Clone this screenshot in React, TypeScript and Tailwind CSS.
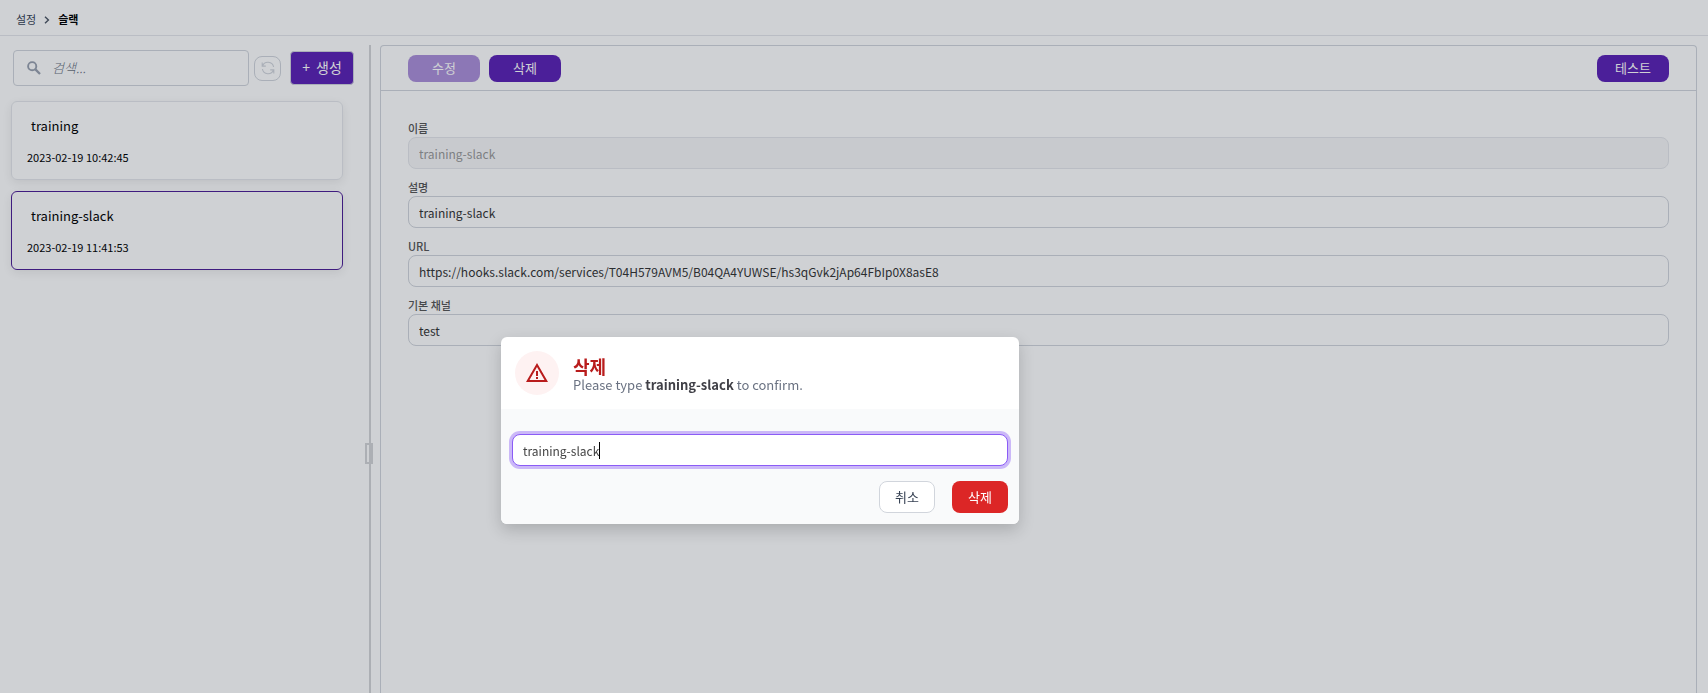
import { MdWarningAmber } from "react-icons/md";

const channels = [
  { name: "training", date: "2023-02-19 10:42:45", selected: false },
  { name: "training-slack", date: "2023-02-19 11:41:53", selected: true },
];

const fields = [
  { id: "name", label: "이름", value: "training-slack", disabled: true },
  { id: "description", label: "설명", value: "training-slack", disabled: false },
  {
    id: "url",
    label: "URL",
    value: "https://hooks.slack.com/services/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",
    disabled: false,
  },
  { id: "channel", label: "기본 채널", value: "test", disabled: false },
];

function SearchIcon() {
  return (
    <svg viewBox="0 0 14 14" className="size-3.5 shrink-0 text-gray-400" fill="none" stroke="currentColor">
      <circle cx="5.2" cy="5.2" r="4.1" strokeWidth="1.9" />
      <path d="M8.4 8.4 13 13" strokeWidth="2.3" />
    </svg>
  );
}

function RefreshIcon() {
  return (
    <svg viewBox="0 0 14 14" className="size-3.5" fill="none" stroke="currentColor" strokeWidth="1.1">
      <path d="M1.2 1.5v3.6h3.6M1.5 5A5.8 5.8 0 0 1 12.6 6" />
      <path d="M12.8 12.5V8.9H9.2M12.5 9A5.8 5.8 0 0 1 1.4 8" />
    </svg>
  );
}

function Breadcrumb() {
  return (
    <nav className="flex h-9 items-center gap-2 border-b border-[#e5e7eb] px-4 pt-1 text-[11px]">
      <a href="#settings" className="text-gray-700">설정</a>
      <svg viewBox="0 0 6 8" className="h-2 w-1.5" fill="none" stroke="#4b5563" strokeWidth="1.4">
        <path d="M1 0.8 4.4 4 1 7.2" />
      </svg>
      <span className="font-bold text-black">슬랙</span>
    </nav>
  );
}

function Sidebar() {
  return (
    <aside className="w-[369px] shrink-0">
      <div className="flex items-center pt-3.5 pr-[15px] pl-[13px]">
        <div className="flex h-9 flex-1 items-center gap-[11px] rounded border border-gray-300 px-[13px]">
          <SearchIcon />
          <input
            type="search"
            aria-label="검색"
            placeholder="검색..."
            className="h-full w-full min-w-0 bg-transparent pb-0.5 text-[13px] font-light italic outline-none placeholder:text-gray-500"
          />
        </div>
        <button
          type="button"
          aria-label="새로고침"
          className="ml-[5px] flex h-[25px] w-[27px] items-center justify-center rounded-lg border border-gray-300 text-gray-300"
        >
          <RefreshIcon />
        </button>
        <button
          type="button"
          className="ml-[9px] flex h-[34px] w-16 items-center justify-center gap-1.5 rounded-sm border border-gray-300 bg-[#5b21b6] pb-0.5 text-sm text-white"
        >
          <span>+</span>
          <span>생성</span>
        </button>
      </div>
      <ul className="flex flex-col gap-[11px] pt-[15px] pr-[26px] pl-[11px]">
        {channels.map((c) => (
          <li
            key={c.name}
            className={`flex h-[79px] flex-col justify-center gap-[11px] rounded-md border px-[15px] pt-px shadow-[0_3px_10px_rgba(0,0,0,0.08)] ${
              c.selected ? "border-[#4c1d95]" : "border-gray-200"
            }`}
          >
            <span className="pl-1 text-[13px] leading-5 text-black">{c.name}</span>
            <span className="text-[11px] leading-5 text-black">{c.date}</span>
          </li>
        ))}
      </ul>
    </aside>
  );
}

function Splitter() {
  return (
    <div className="relative mt-[9px] w-0.5 shrink-0 bg-[#d4d5d8]">
      <div className="absolute top-[398px] -left-1 h-[21px] w-2 border-2 border-[#d4d5d8]" />
    </div>
  );
}

function Detail() {
  const button = "h-[27px] w-[72px] rounded-lg bg-[#5b21b6] text-[13px] leading-5 text-white";
  return (
    <main className="mt-[9px] mr-[11px] ml-[9px] min-w-0 flex-1 rounded-t border border-b-0 border-gray-300">
      <div className="flex h-[45px] items-center gap-[9px] border-b border-gray-300 px-[27px]">
        <button type="button" disabled className={`${button} opacity-50`}>수정</button>
        <button type="button" className={button}>삭제</button>
        <button type="button" className={`${button} ml-auto`}>테스트</button>
      </div>
      <form className="flex flex-col gap-2.5 px-[27px] pt-[29px]">
        {fields.map((f) => (
          <div key={f.id} className="flex flex-col">
            <label htmlFor={f.id} className="text-[11px] leading-[17px] font-medium text-[#555]">
              {f.label}
            </label>
            <input
              id={f.id}
              defaultValue={f.value}
              disabled={f.disabled}
              className="h-8 w-full rounded-lg border border-gray-300 px-2.5 text-xs text-[#333] disabled:border-gray-200 disabled:bg-[#f7f7f8] disabled:text-[#999]"
            />
          </div>
        ))}
      </form>
    </main>
  );
}

function DeleteDialog() {
  return (
    <div className="fixed inset-0 flex items-start justify-center bg-[#111827]/20 pt-[337px] pr-[188px]">
      <div
        role="dialog"
        aria-labelledby="dialog-title"
        className="w-[518px] overflow-hidden rounded-md bg-white shadow-[0_6px_16px_rgba(0,0,0,0.18)]"
      >
        <div className="flex h-[72px] items-center gap-3.5 px-3.5">
          <div className="flex size-11 items-center justify-center rounded-full bg-red-50 text-[#b91c1c]">
            <MdWarningAmber className="size-6" />
          </div>
          <div className="pt-1">
            <h2 id="dialog-title" className="text-lg leading-5 font-bold text-[#b91c1c]">삭제</h2>
            <p className="text-[13px] leading-[18px] text-gray-500">
              Please type <strong className="font-bold text-[#3f3f46]">training-slack</strong> to confirm.
            </p>
          </div>
        </div>
        <div className="bg-gray-50 px-[11px] pt-[25px] pb-[11px]">
          <div className="relative">
            <input
              aria-label="training-slack"
              defaultValue="training-slack"
              className="h-8 w-full rounded-lg border border-[#8b5cf6] bg-white px-2.5 text-xs text-[#444] ring-3 ring-[#cbb8f8] outline-none"
            />
            <span className="absolute top-2 left-[87px] h-[17px] w-px bg-black" />
          </div>
          <div className="flex justify-end gap-[17px] pt-[15px]">
            <button type="button" className="h-8 w-14 rounded-lg border border-gray-300 bg-white text-[13px] text-gray-700">
              취소
            </button>
            <button type="button" className="h-8 w-14 rounded-lg bg-[#dc2626] text-[13px] text-white">
              삭제
            </button>
          </div>
        </div>
      </div>
    </div>
  );
}

export default function App() {
  return (
    <div className="flex min-h-screen flex-col bg-white font-['Noto_Sans_CJK_KR',sans-serif]">
      <Breadcrumb />
      <div className="flex flex-1">
        <Sidebar />
        <Splitter />
        <Detail />
      </div>
      <DeleteDialog />
    </div>
  );
}
